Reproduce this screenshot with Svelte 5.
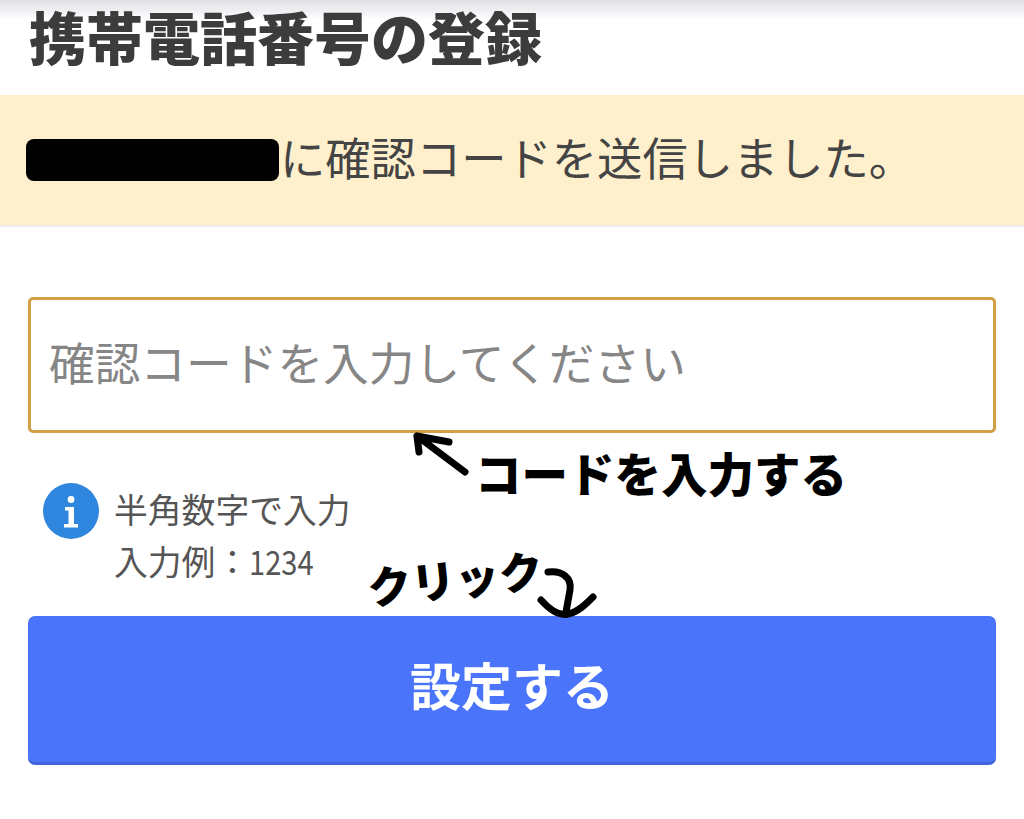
<script>
  const title = '携帯電話番号の登録';
</script>

<div class="page">
  <h1>{title}</h1>
  <div class="notice">
    <span class="redacted"></span><span class="notice-text">に確認コードを送信しました。</span>
  </div>
  <main class="form">
    <input class="code" type="text" placeholder="確認コードを入力してください" />
    <div class="hint">
      <svg class="info" viewBox="0 0 56 56" aria-hidden="true">
        <circle cx="28" cy="28" r="28" fill="#2f86de" />
        <circle cx="28" cy="16.5" r="3.4" fill="#fff" />
        <path d="M22 24h9v17h4v3.6H21V41h4.5V27.6H22z" fill="#fff" />
      </svg>
      <p>半角数字で入力<br />入力例：<span class="digits">1234</span></p>
    </div>
    <button class="submit" type="button"><span>設定する</span></button>
  </main>

  <span class="note note-code">コードを入力する</span>
  <span class="note note-click">クリック</span>
  <svg class="arrows" viewBox="0 0 1024 819" aria-hidden="true">
    <path d="M465 472 L417 436 M417 436 L419 452 M417 436 L449 442" />
    <path d="M548 572 C562 570 572 578 570 590 L566 612 M541 600 C550 610 560 616 568 614 C578 612 586 604 593 597" />
  </svg>
</div>

<style>
  :global(body) {
    margin: 0;
    background: #fff;
  }
  .page {
    position: relative;
    width: 1024px;
    height: 819px;
    overflow: hidden;
    font-family: "Noto Sans CJK JP", "Noto Sans", sans-serif;
    color: #3c3c3c;
    background: linear-gradient(#dfdfe6 0, #fff 20px);
  }
  h1 {
    margin: 0;
    height: 95px;
    padding: 0 0 0 29px;
    box-sizing: border-box;
    font-size: 57px;
    font-weight: 900;
    line-height: 70px;
    white-space: nowrap;
  }
  .notice {
    display: flex;
    align-items: center;
    height: 130px;
    padding-left: 26px;
    background: #fff0cd;
    border-bottom: 2px solid #eeeeee;
    font-size: 45.3px;
    color: #444;
    white-space: nowrap;
  }
  .redacted {
    width: 253px;
    height: 42px;
    margin-right: 1px;
    background: #000;
    border-radius: 8px;
  }
  .notice-text {
    margin-top: -8px;
  }
  .form {
    display: flex;
    flex-direction: column;
    padding: 70px 28px 0;
  }
  .code {
    height: 136px;
    box-sizing: border-box;
    padding: 0 19px 8px 18px;
    border: 3px solid #d0a044;
    border-radius: 5px;
    background: #fff;
    font: 400 45.7px "Noto Sans CJK JP", "Noto Sans", sans-serif;
    outline: none;
  }
  .code::placeholder {
    color: #868686;
    opacity: 1;
  }
  .hint {
    display: flex;
    gap: 15px;
    height: 183px;
    box-sizing: border-box;
    padding: 50px 0 0 15px;
    color: #555;
  }
  .info {
    flex: none;
    width: 56px;
    height: 56px;
  }
  .hint p {
    margin: 0;
    font-size: 33.8px;
    line-height: 52px;
    white-space: nowrap;
  }
  .digits {
    display: inline-block;
    transform: scaleX(0.86);
    transform-origin: left center;
  }
  .submit {
    height: 149px;
    padding: 0 0 10px;
    border: 0;
    border-radius: 7px;
    border-bottom: 3px solid #3f66dc;
    background: #4a75fb;
    color: #fff;
    font: 700 51px "Noto Sans CJK JP", "Noto Sans", sans-serif;
  }
  .note {
    position: absolute;
    color: #000;
    font-weight: 900;
    white-space: nowrap;
    line-height: 1;
  }
  .note-code {
    left: 475px;
    top: 449px;
    font-size: 46.5px;
  }
  .note-click {
    left: 367px;
    top: 555px;
    font-size: 44px;
    transform: rotate(-6deg);
  }
  .arrows {
    position: absolute;
    inset: 0;
    width: 1024px;
    height: 819px;
    pointer-events: none;
  }
  .arrows path {
    fill: none;
    stroke: #000;
    stroke-width: 7;
    stroke-linecap: round;
    stroke-linejoin: round;
  }
</style>
